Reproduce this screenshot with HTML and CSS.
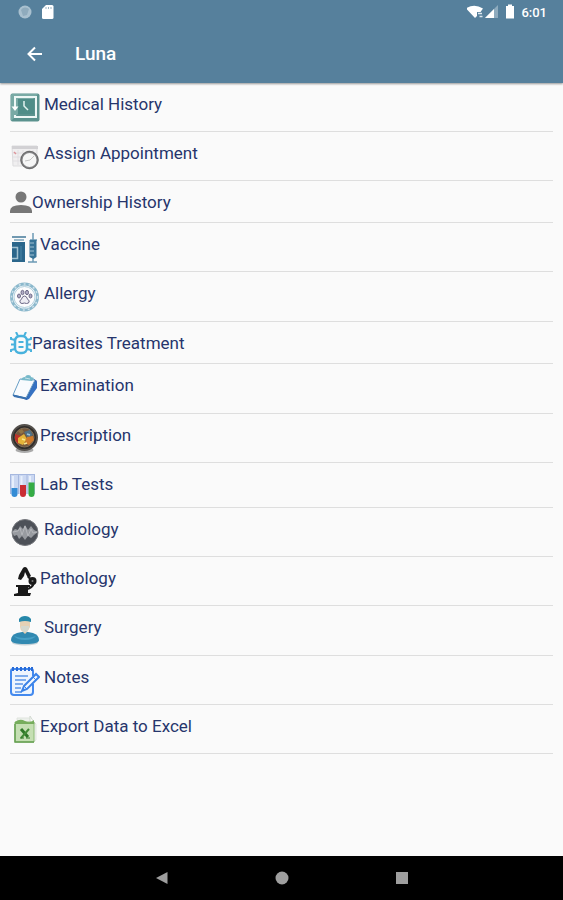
FILE: index.html
```html
<!DOCTYPE html>
<html lang="en">
<head>
  <meta charset="UTF-8">
  <meta name="viewport" content="width=device-width, initial-scale=1.0">
  <title>Luna</title>
  <link rel="stylesheet" href="styles.css">
</head>
<body>

  <header class="header">
    <div class="status-bar">
      <svg class="status-left" width="36" height="16" viewBox="0 0 36 16">
        <circle cx="7" cy="8" r="6.5" fill="#a9c0cf"/>
        <path d="M3 6a5 5 0 0 1 8-1l-2 6-4 1z" fill="#8fabbd"/>
        <path d="M28 1h6q1.500 0 1.500 1.500v11q0 1.500-1.500 1.500h-8.500q-1.500 0-1.500-1.500V5z" fill="#fff"/>
        <path d="M28 3v2M30.500 3v2M33 3v2" stroke="#9bb4c4" stroke-width="1"/>
      </svg>
      <svg class="status-right" width="49" height="16" viewBox="0 0 49 16">
        <path d="M-1 4.500Q7-1 16 4.500L13.500 8H10v4l-2 2z" fill="#fff"/>
        <path d="M11 9.500h4M12.500 12.500h3" stroke="#dce7ee" stroke-width="1.500"/>
        <path d="M31 1v13H18z" fill="#8eabbe"/>
        <path d="M27 5v9h-9z" fill="#fff"/>
        <path d="M39 2h2V.500h4V2h2v12.500h-8z" fill="#fff"/>
      </svg>
      <span class="clock">6:01</span>
    </div>
    <div class="toolbar">
      <button class="back" aria-label="Back">
        <svg width="16" height="16" viewBox="0 0 16 16"><path d="M15 8H2M8 1.500L1.500 8 8 14.500" fill="none" stroke="#fff" stroke-width="2"/></svg>
      </button>
      <h1>Luna</h1>
    </div>
  </header>

  <main>
    <ul class="menu">
      <li><a href="#" class="spaced">
        <svg width="30" height="30" viewBox="0 0 30 30">
          <rect x=".500" y=".500" width="29" height="28" rx="2" fill="#5b928e"/>
          <path d="M1 28V2q0-1 1-1h26z" fill="#79aaa5"/>
          <rect x="8" y="6" width="16" height="15" fill="#4f8d88"/>
          <path d="M5 15V4h21v20H5v-2" fill="none" stroke="#edf7f5" stroke-width="2"/>
          <path d="M1.500 13.500h7L5 18z" fill="#fff"/>
          <path d="M14 8v5l4 4" fill="none" stroke="#e2f2ef" stroke-width="1.500"/>
        </svg>
        <span>Medical History</span></a></li>
      <li><a href="#" class="spaced">
        <svg width="30" height="30" viewBox="0 0 30 30">
          <path d="M2 4h25v18l-2 2H3z" fill="#f0eff0" stroke="#dddcde"/>
          <path d="M2 4h26v3H2z" fill="#d2d1d4"/>
          <path d="M3 11h24M3 15h24M3 19h24M8 8v15M13 8v15M18 8v15M23 8v15" stroke="#dddcde" stroke-width=".800"/>
          <path d="M4 10l2 2" stroke="#de9499" stroke-width="1.500"/>
          <circle cx="19.500" cy="18" r="8" fill="#f6f6f6" stroke="#828284" stroke-width="2"/>
          <circle cx="19.500" cy="18" r="8.800" fill="none" stroke="#444" stroke-width=".600"/>
          <path d="M15 19l5-1 4-4" fill="none" stroke="#c4c4c4"/>
        </svg>
        <span>Assign Appointment</span></a></li>
      <li><a href="#">
        <svg width="22" height="23" viewBox="0 0 22 23">
          <circle cx="11" cy="6" r="5.500" fill="#777"/>
          <path d="M0 22v-2q0-6 11-6t11 6v2z" fill="#777"/>
        </svg>
        <span>Ownership History</span></a></li>
      <li><a href="#">
        <svg width="30" height="30" viewBox="0 0 30 30">
          <path d="M2 4h14" stroke="#7199b1" stroke-width="2"/>
          <path d="M4 7h10" stroke="#9bb9ca" stroke-width="2"/>
          <path d="M2 9h13v20H2z" fill="#2b668b"/>
          <path d="M2 14.500h5.500v11H2" fill="none" stroke="#a1c1d1" stroke-width="1.500"/>
          <path d="M11 13v14" stroke="#4d86a7"/>
          <path d="M23 0v7M20 7h7M23 25v4M18 29h9" stroke="#6c9ab5" stroke-width="1.500"/>
          <path d="M19.500 7h7v17l-3 2-4-2z" fill="#377397"/>
          <path d="M20 10h4M20 14h4M20 18h4M20 22h4" stroke="#9fc1d3"/>
        </svg>
        <span>Vaccine</span></a></li>
      <li><a href="#" class="spaced">
        <svg width="30" height="31" viewBox="0 0 30 31">
          <circle cx="14.500" cy="15" r="13" fill="#f4f8fa" stroke="#8bb8cc" stroke-width="3"/>
          <circle cx="14.500" cy="15" r="13" fill="none" stroke="#d0e2eb" stroke-width="1.500" stroke-dasharray="2 3"/>
          <circle cx="14.500" cy="15" r="10.500" fill="#fcfcfd" stroke="#b3d1de"/>
          <g fill="#b2aec6" stroke="#6d6987" stroke-width="1">
            <ellipse cx="9" cy="14" rx="1.500" ry="2"/>
            <ellipse cx="12.500" cy="10.500" rx="1.500" ry="2.200"/>
            <ellipse cx="17" cy="10.500" rx="1.500" ry="2.200"/>
            <ellipse cx="20.500" cy="14" rx="1.500" ry="2"/>
            <path d="M14.500 14q2 0 3 3 3 2 1 4-2 1-4 0-3 1-4 0-2-2 1-4 1-3 3-3z" fill="#eeedf3"/>
          </g>
        </svg>
        <span>Allergy</span></a></li>
      <li><a href="#">
        <svg width="22" height="23" viewBox="0 0 22 23">
          <g fill="none" stroke="#48b2dd" stroke-width="2">
            <rect x="5" y="4" width="12" height="17" rx="5" stroke-width="2.500"/>
            <path d="M6 0l2 4M16 0l-2 4M1 5v2l4 1M1 12.500h4M1 20v-2l4-1M21 5v2l-4 1M21 12.500h-4M21 20v-2l-4-1M8.500 10h5M8.500 15h5"/>
          </g>
        </svg>
        <span>Parasites Treatment</span></a></li>
      <li><a href="#">
        <svg width="30" height="31" viewBox="0 0 30 31">
          <path d="M24 5l3 2-9 17-1 2-3-1z" fill="#2456aa"/>
          <path d="M25 7l2 1v6l-8 11-3 1z" fill="#3672c2"/>
          <path d="M10 5l15 1-9 18-13-3z" fill="#f8fbfe" stroke="#699fc6"/>
          <path d="M3 21l13 3v1L4 22.500z" fill="#376fae" stroke="#376fae"/>
          <path d="M11 6q1-3 4-3 1-2 3-2 3 0 3 2l3 1-2 3z" fill="#78b9ca"/>
          <path d="M15 4l5 1" stroke="#c6e4ea"/>
        </svg>
        <span>Examination</span></a></li>
      <li><a href="#">
        <svg width="30" height="30" viewBox="0 0 30 30">
          <ellipse cx="14.500" cy="26" rx="9" ry="3" fill="#aaa"/>
          <circle cx="14.500" cy="13.500" r="12.500" fill="#302d2b" stroke="#55514d" stroke-width="2"/>
          <circle cx="14.500" cy="13.500" r="9.500" fill="#76583d" stroke="#82705a"/>
          <path d="M5 10l6 2 2 5-5 3-3-4z" fill="#bc3329"/>
          <path d="M8 14l6-4 3 5-4 6-5-2z" fill="#e4b43a"/>
          <path d="M14 8l6-2 3 5-5 3z" fill="#4f7186"/>
          <path d="M17 13l6-1 1 4-5 5-4-2z" fill="#cf7a2c"/>
          <path d="M8 7l4-2 2 3-3 2z" fill="#927444"/>
          <path d="M12 15l3 1M14 20l3-1" stroke="#fae78f" stroke-width="1.500"/>
          <path d="M17 10l3 1" stroke="#9fc0d5" stroke-width="1.500"/>
        </svg>
        <span>Prescription</span></a></li>
      <li><a href="#" class="spaced">
        <svg width="26" height="26" viewBox="0 0 26 26">
          <path d="M0 1h25v20H0z" fill="#cbd8f2"/>
          <path d="M0 1.500h25M.500 1v20M8.500 1v20M17 1v20M24.500 1v20" stroke="#a6b8df"/>
          <path d="M3 3v12M11.500 3v9M20 3v6" stroke="#e7effc" stroke-width="2"/>
          <path d="M1.500 15h6v6q0 3-3 3t-3-3z" fill="#348cd5"/>
          <path d="M10 12h6v9q0 3-3 3t-3-3z" fill="#c92d34"/>
          <path d="M18.500 9.500h6V21q0 3-3 3t-3-3z" fill="#35ac45"/>
        </svg>
        <span>Lab Tests</span></a></li>
      <li><a href="#" class="spaced">
        <svg width="30" height="30" viewBox="0 0 30 30">
          <circle cx="15" cy="14.500" r="13" fill="#4d5158" stroke="#77797e"/>
          <path d="M2 14l3-3 3 1 2-4 3 3 2-4 3 5 3-4 3 4 4 2-4 3-3 3-3-2-3 4-3-4-3 3-2-4-3 1z" fill="#989ba0"/>
          <path d="M3 14l5-1 2-3 2 7 3-9 3 10 3-7 2 4 4-1" fill="none" stroke="#b4b6ba"/>
        </svg>
        <span>Radiology</span></a></li>
      <li><a href="#">
        <svg width="30" height="30" viewBox="0 0 30 30">
          <g fill="#191919">
            <path d="M13 1q2-2 4 0l2 4 2 4-3 2-3-6-1 4-3 4-3-1 1-4z"/>
            <circle cx="22.500" cy="14" r="4"/>
            <path d="M6 18h14v2h-2v6h3l-1 3H4v-2l4-1v-6H6z"/>
          </g>
          <path d="M18 10l4 3M23 14q2 5-5 8" fill="none" stroke="#191919" stroke-width="2"/>
          <circle cx="22.500" cy="14" r="1" fill="#777"/>
        </svg>
        <span>Pathology</span></a></li>
      <li><a href="#" class="spaced">
        <svg width="30" height="31" viewBox="0 0 30 31">
          <ellipse cx="15" cy="26.500" rx="13" ry="3" fill="#c5d2d8"/>
          <path d="M1 24q0-5 6-7l5-1h6l5 1q6 2 6 7 0 4-14 4T1 24z" fill="#3189b1"/>
          <path d="M4 20q10 4 22 0-3 4-11 4T4 20z" fill="#47a0c6"/>
          <path d="M10 5h10v6q-2 4-3 5l-2 2-2-2q-3-2-3-5z" fill="#e5d1b4"/>
          <path d="M11 10h8v2l-2 4h-4l-2-4z" fill="#d5d9cf"/>
          <path d="M9 6V3q2-3 6-3t6 3v3q-6-2-12 0z" fill="#2788aa"/>
        </svg>
        <span>Surgery</span></a></li>
      <li><a href="#" class="spaced">
        <svg width="30" height="30" viewBox="0 0 30 30">
          <path d="M23 18v8q0 3-3 3H4q-3 0-3-3V5q0-2 2-2h18q2 0 2 2v5" fill="#eef5fe" stroke="#4389ee" stroke-width="2"/>
          <path d="M3 1v4M7 1v4M11 1v4M15 1v4M19 1v4M22 1v4" stroke="#286bd7" stroke-width="2"/>
          <path d="M5 10h13M5 14h11M5 18h8M5 22h6M5 26h7" stroke="#5b95e8" stroke-width="1.500"/>
          <path d="M14 20L26 8l3 3-12 12-5 2z" fill="#f4f9ff" stroke="#3a83e8" stroke-width="2"/>
          <path d="M23 11l3 3M14 20l3 3" stroke="#3a83e8"/>
        </svg>
        <span>Notes</span></a></li>
      <li><a href="#">
        <svg width="30" height="30" viewBox="0 0 30 30">
          <path d="M7 3h13l6 6v16l-3 2H9z" fill="#edf0ec" stroke="#e0e5de"/>
          <path d="M20 1v5l5 3z" fill="#fff" stroke="#d3dad1"/>
          <path d="M5 7h19v20H5z" fill="#c5dfb3" stroke="#8cba75"/>
          <path d="M5 7q5-4 10-1t9-1v4H5z" fill="#76ad5c"/>
          <path d="M5 9v18h19" fill="none" stroke="#66a052" stroke-width="1.500"/>
          <path d="M11 14l7 8" stroke="#2e7727" stroke-width="3"/>
          <path d="M19 14l-8 9" stroke="#418b36" stroke-width="2"/>
          <path d="M10 23h4M16 23h4" stroke="#2e7727"/>
        </svg>
        <span>Export Data to Excel</span></a></li>
    </ul>
  </main>

  <nav class="bottom-nav">
    <button aria-label="Back"><svg width="14" height="14" viewBox="0 0 14 14"><path d="M12.500 1v12L1 7z"/></svg></button>
    <button aria-label="Home"><svg width="14" height="14" viewBox="0 0 14 14"><circle cx="7" cy="7" r="6.500"/></svg></button>
    <button aria-label="Recent apps"><svg width="14" height="14" viewBox="0 0 14 14"><path d="M1 1h12v12H1z"/></svg></button>
  </nav>

</body>
</html>
```
FILE: styles.css
```css
* {
  box-sizing: border-box;
}

body {
  margin: 0;
  min-height: 100vh;
  display: flex;
  flex-direction: column;
  font-family: Roboto, "Liberation Sans", sans-serif;
  background-color: #fafafa;
}

svg {
  display: block;
  flex-shrink: 0;
}

button {
  display: flex;
  align-items: center;
  justify-content: center;
  padding: 0;
  border: none;
  background: none;
  cursor: pointer;
}

.header {
  background-color: #56809c;
  color: #fff;
  box-shadow: 0 1px 2px rgba(0, 0, 0, 0.4);
}

.status-bar {
  display: flex;
  align-items: center;
  height: 24px;
  padding: 0 16px 0 18px;
}

.status-right {
  margin-left: auto;
}

.clock {
  margin-left: 5px;
  font-size: 13px;
  font-weight: 500;
}

.toolbar {
  display: flex;
  align-items: center;
  height: 59px;
  padding-left: 19px;
}

.back {
  width: 32px;
  height: 32px;
}

.toolbar h1 {
  margin: 0 0 0 24px;
  font-size: 19px;
  font-weight: 500;
}

main {
  flex: 1;
}

.menu {
  list-style: none;
  margin: 0;
  padding: 0 10px;
}

.menu li {
  border-bottom: 1px solid #dedede;
}

.menu a {
  display: flex;
  align-items: flex-start;
  padding: 10px 0 8px;
  color: #26356c;
  font-size: 17px;
  line-height: 23px;
  text-decoration: none;
}

.menu a.spaced {
  gap: 4px;
}

.bottom-nav {
  display: flex;
  align-items: center;
  justify-content: center;
  gap: 80px;
  height: 44px;
  background-color: #000;
}

.bottom-nav button {
  width: 40px;
  height: 40px;
}

.bottom-nav svg {
  fill: #9e9e9e;
}
```
